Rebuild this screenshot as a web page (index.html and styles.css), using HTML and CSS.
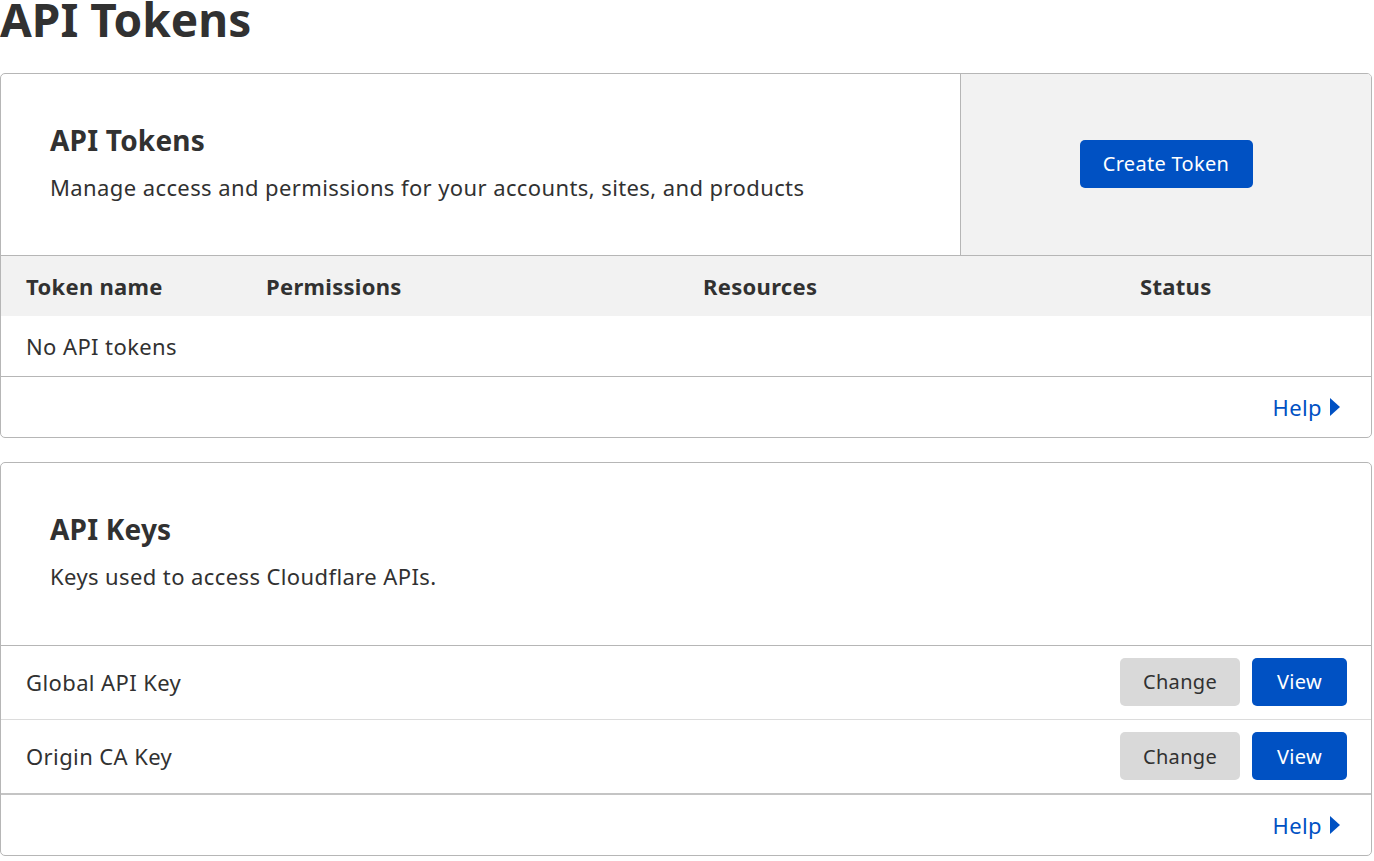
FILE: index.html
```html
<!DOCTYPE html>
<html lang="en">
<head>
<meta charset="utf-8">
<title>API Tokens</title>
<link rel="stylesheet" href="styles.css">
</head>
<body>
<h1 class="page-title">API Tokens</h1>

<section class="card">
  <div class="card-top">
    <div class="card-intro">
      <h2 class="card-title">API Tokens</h2>
      <p class="card-desc">Manage access and permissions for your accounts, sites, and products</p>
    </div>
    <div class="card-aside">
      <button class="btn btn-primary btn-create">Create Token</button>
    </div>
  </div>
  <div class="table-head">
    <div class="th">Token name</div>
    <div class="th">Permissions</div>
    <div class="th">Resources</div>
    <div class="th">Status</div>
  </div>
  <div class="table-empty">No API tokens</div>
  <div class="card-footer">
    <a class="help-link" href="#">Help <svg class="help-caret" width="10" height="18" viewBox="0 0 10 18"><path d="M0 0 L10 9 L0 18 Z" fill="currentColor"/></svg></a>
  </div>
</section>

<section class="card card-keys">
  <div class="card-top">
    <div class="card-intro">
      <h2 class="card-title">API Keys</h2>
      <p class="card-desc">Keys used to access Cloudflare APIs.</p>
    </div>
  </div>
  <div class="key-row">
    <span class="key-name">Global API Key</span>
    <div class="key-actions">
      <button class="btn btn-secondary btn-change">Change</button>
      <button class="btn btn-primary btn-view">View</button>
    </div>
  </div>
  <div class="key-row key-row-last">
    <span class="key-name">Origin CA Key</span>
    <div class="key-actions">
      <button class="btn btn-secondary btn-change">Change</button>
      <button class="btn btn-primary btn-view">View</button>
    </div>
  </div>
  <div class="card-footer">
    <a class="help-link" href="#">Help <svg class="help-caret" width="10" height="18" viewBox="0 0 10 18"><path d="M0 0 L10 9 L0 18 Z" fill="currentColor"/></svg></a>
  </div>
</section>
</body>
</html>
```

FILE: styles.css
```css
* { box-sizing: border-box; }

body {
  margin: 0;
  width: 1372px;
  font-family: "Noto Sans", "Open Sans", sans-serif;
  color: #313131;
  background: #ffffff;
}

.page-title {
  margin: 0 0 35px;
  font-size: 46px;
  line-height: 38px;
  font-weight: 700;
}

.card {
  border: 1px solid #b6b6b6;
  border-radius: 5px;
  overflow: hidden;
  margin-bottom: 24px;
}

.card-top {
  display: flex;
  height: 182px;
  border-bottom: 1px solid #b6b6b6;
}

.card-keys .card-top { height: 183px; }

.card-intro {
  flex: 1;
  padding: 48px 0 0 49px;
}

.card-title {
  margin: 0;
  font-size: 28px;
  line-height: 36px;
  font-weight: 700;
  letter-spacing: 0.2px;
}

.card-desc {
  margin: 14px 0 0;
  font-size: 22px;
  line-height: 30px;
  letter-spacing: 0.4px;
}

.card-aside {
  width: 411px;
  background: #f2f2f2;
  border-left: 1px solid #b6b6b6;
  display: flex;
  align-items: center;
  justify-content: center;
  padding-bottom: 2px;
}

.btn {
  font-family: inherit;
  font-size: 20px;
  letter-spacing: 0.3px;
  border: none;
  border-radius: 5px;
  height: 48px;
  cursor: pointer;
}

.btn-primary { background: #0051c3; color: #ffffff; }
.btn-secondary { background: #d9d9d9; color: #313131; }

.btn-create { width: 173px; }
.btn-change { width: 120px; }
.btn-view { width: 95px; }

.table-head {
  display: grid;
  grid-template-columns: 240px 437px 437px 1fr;
  background: #f2f2f2;
  height: 60px;
  align-items: center;
  padding-left: 25px;
}

.th {
  font-size: 22px;
  font-weight: 700;
  letter-spacing: 0.3px;
}

.table-empty {
  height: 61px;
  display: flex;
  align-items: center;
  padding-left: 25px;
  font-size: 22px;
  letter-spacing: 0.4px;
  border-bottom: 1px solid #b6b6b6;
}

.card-footer {
  height: 60px;
  display: flex;
  align-items: center;
  justify-content: flex-end;
  padding-right: 31px;
}

.help-link {
  color: #0051c3;
  text-decoration: none;
  font-size: 22px;
  letter-spacing: 0.4px;
  display: flex;
  align-items: center;
  gap: 8px;
}

.help-caret { display: block; }

.key-row {
  display: flex;
  align-items: center;
  justify-content: space-between;
  height: 74px;
  padding: 0 24px 2px 25px;
  border-bottom: 1px solid #dcdcdc;
}

.key-row-last {
  height: 75px;
  padding-bottom: 1px;
  border-bottom: 2px solid #c4c4c4;
}

.key-name {
  font-size: 22px;
  letter-spacing: 0.4px;
}

.key-actions {
  display: flex;
  gap: 12px;
}
```
